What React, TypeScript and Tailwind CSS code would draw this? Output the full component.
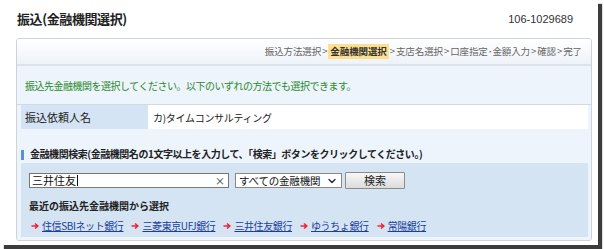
import { ChevronDown } from "lucide-react"

const jp = "font-['Noto_Sans_CJK_JP','Noto_Sans',sans-serif]"

const steps = ["振込方法選択", "金融機関選択", "支店名選択", "口座指定･金額入力", "確認", "完了"]

const recentBanks = ["住信SBIネット銀行", "三菱東京UFJ銀行", "三井住友銀行", "ゆうちょ銀行", "常陽銀行"]

function StepBar() {
  return (
    <div className="flex h-[25px] items-center justify-end bg-gradient-to-b from-white to-[#eef3f9] pr-[9px] text-[9.5px] tracking-[-0.1px] text-[#666]">
      {steps.map((step, i) => (
        <span key={step} className="flex items-center">
          {i > 0 && <span className="px-[1px]">&gt;</span>}
          <span
            className={
              step === "金融機関選択"
                ? "bg-[#fde08f] px-[2px] font-bold text-[#333]"
                : ""
            }
          >
            {step}
          </span>
        </span>
      ))}
    </div>
  )
}

function RecentLink({ name }: { name: string }) {
  return (
    <span className="flex items-center gap-[3px]">
      <svg width="8" height="8" viewBox="0 0 8 8">
        <path d="M0.5 4H6.5M4 1.5L6.8 4L4 6.5" stroke="#f0243c" strokeWidth="1.6" fill="none" />
      </svg>
      <a className="text-[#1b3d9b] underline">{name}</a>
    </span>
  )
}

export default function App() {
  return (
    <div className={`h-[249px] w-[604px] bg-white ${jp}`}>
      <div className="flex h-[245px] w-[598px] flex-col bg-white shadow-[4px_4px_1px_#3c3c3c]">
        <div className="flex h-[38px] items-center justify-between pl-[17px] pr-[25px]">
          <span className="text-[13px] font-bold tracking-[-0.4px] text-[#222]">振込(金融機関選択)</span>
          <span className="font-['Liberation_Sans',sans-serif] text-[11px] text-[#333]">106-1029689</span>
        </div>

        <div className="ml-[16px] w-[576px] overflow-hidden rounded-[3px] border border-[#cdd3d9]">
          <StepBar />
          <div className="h-[2px] bg-[#dde3ea]" />
          <div className="flex h-[38px] items-center bg-[#edf4fc] pl-[8px] text-[10px] tracking-[-0.5px] text-[#2a8a2a]">
            振込先金融機関を選択してください。以下のいずれの方法でも選択できます。
          </div>
          <div className="h-[1px] bg-[#d3d9e0]" />

          <div className="bg-[#edf4fc] pl-[4px] pr-[3px] pb-[3px]">
            <div className="flex h-[24px]">
              <div className="flex w-[127px] items-center bg-[#d5e4f4] pl-[4px] text-[11px] text-[#222]">
                振込依頼人名
              </div>
              <div className="flex flex-1 items-center bg-white pl-[5px] text-[10px] tracking-[-0.3px] text-[#222]">
                カ)タイムコンサルティング
              </div>
            </div>

            <div className="flex h-[34px] items-end pb-[2px]">
              <div className="mb-[1px] h-[10px] w-[3px] bg-[#5b8fe0]" />
              <span className="ml-[6px] text-[10px] font-bold tracking-[-0.45px] text-[#222]">
                金融機関検索(金融機関名の1文字以上を入力して、「検索」ボタンをクリックしてください。)
              </span>
            </div>

            <div className="flex h-[74px] flex-col bg-[#d5e4f3] px-[8px] pt-[9px]">
              <div className="flex items-center">
                <div className="flex h-[15px] w-[200px] items-center justify-between border border-[#777] bg-white pl-[2px] pr-[3px] text-[11px] text-[#111]">
                  <span className="flex items-center">
                    三井住友
                    <span className="ml-[1px] h-[11px] w-[1px] bg-[#111]" />
                  </span>
                  <span className="text-[10px] leading-none text-[#333]">×</span>
                </div>
                <div className="ml-[6px] flex h-[15px] w-[107px] items-center justify-between whitespace-nowrap border border-[#888] bg-white pl-[3px] pr-[3px] text-[10.5px] tracking-[-0.2px] text-[#111]">
                  すべての金融機関
                  <ChevronDown size={12} strokeWidth={2.5} className="shrink-0 text-[#222]" />
                </div>
                <div className="ml-[3px] flex h-[17px] w-[60px] items-center justify-center rounded-[1px] border border-[#8b8b8b] bg-gradient-to-b from-[#f7f7f7] to-[#dcdcdc] text-[11px] text-[#222]">
                  検索
                </div>
              </div>
              <div className="mt-[9px] text-[10px] font-bold text-[#222]">最近の振込先金融機関から選択</div>
              <div className="mt-[5px] flex items-center gap-[8px] pl-[2px] text-[10px] tracking-[-0.4px]">
                {recentBanks.map((bank) => (
                  <RecentLink key={bank} name={bank} />
                ))}
              </div>
            </div>
          </div>
        </div>
      </div>
    </div>
  )
}
